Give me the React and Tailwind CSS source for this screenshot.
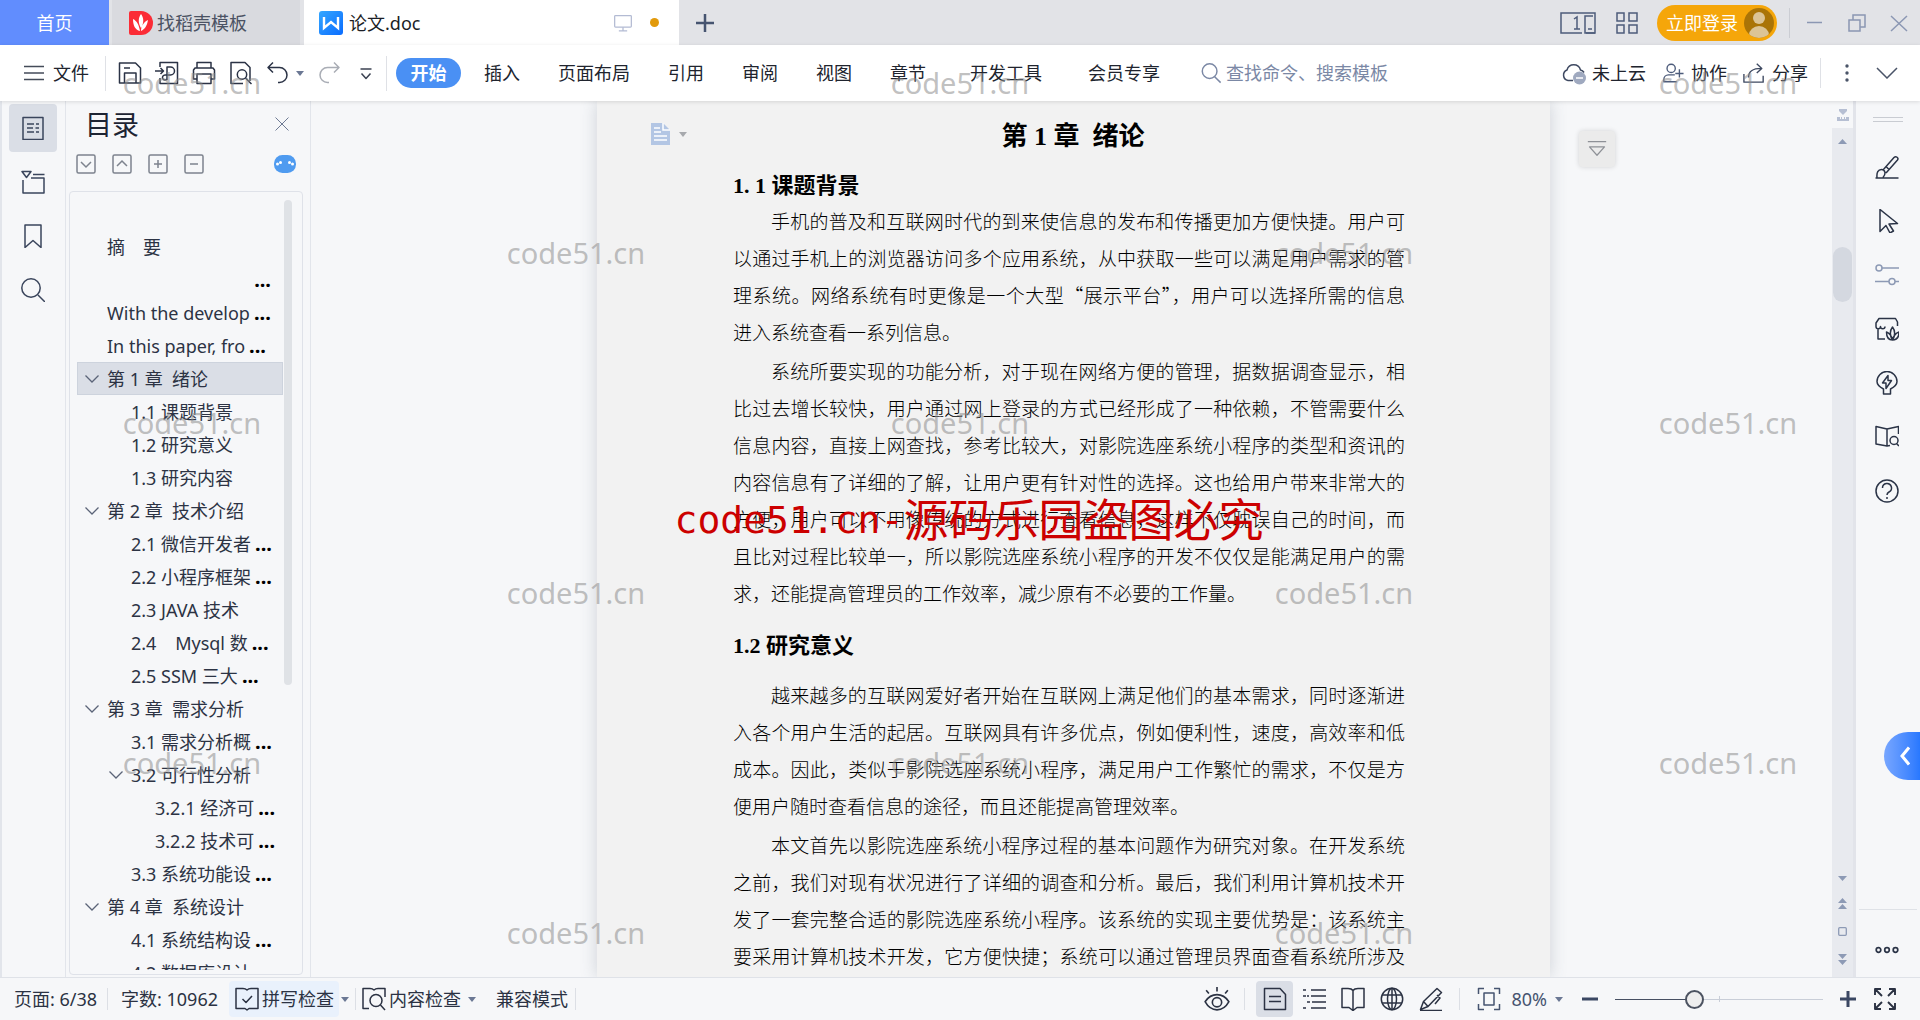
import { useState } from 'react';

const Svg = ({ size = 24, sw = 1.5, className = '', children }) => (
  <svg
    width={size}
    height={size}
    viewBox="0 0 24 24"
    fill="none"
    stroke="currentColor"
    strokeWidth={sw}
    strokeLinejoin="round"
    className={`shrink-0 ${className}`}
    aria-hidden="true"
  >
    {children}
  </svg>
);

const Caret = ({ className = 'text-[#6b7894]' }) => (
  <svg width="8" height="5" viewBox="0 0 8 5" className={`shrink-0 ${className}`} aria-hidden="true">
    <path d="M0 0h8L4 5z" fill="currentColor" />
  </svg>
);

const outline = [
  { level: 1, text: '摘\u3000要' },
  { level: 1, text: '', cut: true },
  { level: 1, text: 'With the develop', cut: true },
  { level: 1, text: 'In this paper, fro', cut: true },
  { level: 1, text: '第 1 章  绪论', open: true },
  { level: 2, text: '1.1 课题背景' },
  { level: 2, text: '1.2 研究意义' },
  { level: 2, text: '1.3 研究内容' },
  { level: 1, text: '第 2 章  技术介绍', open: true },
  { level: 2, text: '2.1 微信开发者', cut: true },
  { level: 2, text: '2.2 小程序框架', cut: true },
  { level: 2, text: '2.3 JAVA 技术' },
  { level: 2, text: '2.4    Mysql 数', cut: true },
  { level: 2, text: '2.5 SSM 三大', cut: true },
  { level: 1, text: '第 3 章  需求分析', open: true },
  { level: 2, text: '3.1 需求分析概', cut: true },
  { level: 2, text: '3.2 可行性分析', open: true },
  { level: 3, text: '3.2.1 经济可', cut: true },
  { level: 3, text: '3.2.2 技术可', cut: true },
  { level: 2, text: '3.3 系统功能设', cut: true },
  { level: 1, text: '第 4 章  系统设计', open: true },
  { level: 2, text: '4.1 系统结构设', cut: true },
  { level: 2, text: '4.2 数据库设计' },
];

const indent = { 1: 'pl-2', 2: 'pl-8', 3: 'pl-14' };

function TitleBar() {
  return (
    <header className="flex h-[45px] shrink-0 items-center bg-[#e2e3e7] text-lg">
      <button className="h-full w-[109px] bg-[#618dfe] text-white">首页</button>
      <button className="ml-[3px] flex h-full w-[188px] items-center gap-1 bg-[#d9dadf] pl-[17px] text-[#4b5263]">
        <svg width="24" height="24" viewBox="0 0 24 24" aria-hidden="true">
          <path d="M2 0h10a12 12 0 0 1 0 24H2a2 2 0 0 1-2-2V2a2 2 0 0 1 2-2z" fill="#fb2c36" />
          <path d="M12 3c3 4 3 9 0 14-3-5-3-10 0-14zM4 8c4 2 6 6 7 12-5-1-7-6-7-12zM19 9c-1 6-3 9-7 11 0-5 3-9 7-11z" fill="#fff" />
        </svg>
        找稻壳模板
      </button>
      <button className="ml-1 flex h-full w-[375px] items-center bg-white pl-[15px] text-[#1b1e26]">
        <svg width="24" height="24" viewBox="0 0 24 24" className="mr-1.5" aria-hidden="true">
          <defs>
            <linearGradient id="writer" x1="0" y1="0" x2="1" y2="1">
              <stop offset="0" stopColor="#35a7ff" />
              <stop offset="1" stopColor="#0a6cff" />
            </linearGradient>
          </defs>
          <rect width="24" height="24" rx="3" fill="url(#writer)" />
          <path d="M5 6v11l7-6 7 6V6" fill="none" stroke="#fff" strokeWidth="2.4" />
        </svg>
        <span className="flex-1 text-left">论文.doc</span>
        <Svg size={20} className="mr-[17px] text-[#b3bbd3]">
          <rect x="2" y="3" width="20" height="14" rx="1" />
          <path d="M12 17v4M7 21.5h10" />
        </Svg>
        <span className="mr-5 h-[9px] w-[9px] rounded-full bg-[#e29a0c]" />
      </button>
      <button className="ml-[17px] text-[#465470]" aria-label="新建">
        <svg width="18" height="18" viewBox="0 0 18 18" aria-hidden="true">
          <path d="M9 0v18M0 9h18" stroke="currentColor" strokeWidth="2.5" />
        </svg>
      </button>

      <div className="ml-auto flex h-full items-center pr-3 text-[#4d5c7b]">
        <svg width="36" height="22" viewBox="0 0 36 22" fill="none" stroke="currentColor" strokeWidth="1.5" className="mr-5" aria-hidden="true">
          <path d="M22 21H1V1h34v20h-9" />
          <path d="M33 4h-8v17h10M28 17h4" />
          <path d="M14 7l3-2v12M14 17h6" />
        </svg>
        <svg width="22" height="22" viewBox="0 0 22 22" fill="none" stroke="currentColor" strokeWidth="1.5" className="mr-[19px]" aria-hidden="true">
          <path d="M1 1h7v8H1zM13 1h8v8h-8zM1 13h7v8H1zM13 13h8v8h-8z" />
        </svg>
        <button className="flex h-9 w-[120px] items-center justify-between rounded-full bg-[#f5a60a] pl-[9px] pr-[3px] text-white">
          立即登录
          <svg width="30" height="30" viewBox="0 0 30 30" aria-hidden="true">
            <clipPath id="face"><circle cx="15" cy="15" r="15" /></clipPath>
            <g clipPath="url(#face)">
              <rect width="30" height="30" fill="#aa7407" />
              <circle cx="15" cy="10" r="6" fill="#dcc496" />
              <ellipse cx="15" cy="27" rx="10" ry="9" fill="#dcc496" />
            </g>
          </svg>
        </button>
        <span className="mx-3 h-[30px] w-px bg-[#cbcdd3]" />
        <div className="flex items-center gap-6 pl-1 text-[#8b97b3]">
          <button aria-label="最小化"><svg width="18" height="18" viewBox="0 0 18 18" fill="none" stroke="currentColor" strokeWidth="1.5"><path d="M1 8.5h15" /></svg></button>
          <button aria-label="还原"><svg width="18" height="18" viewBox="0 0 18 18" fill="none" stroke="currentColor" strokeWidth="1.5"><path d="M1 6h11v11H1zM5 6V1h12v12h-5" /></svg></button>
          <button aria-label="关闭"><svg width="18" height="18" viewBox="0 0 18 18" fill="none" stroke="currentColor" strokeWidth="1.5"><path d="M1 2l16 15M17 2L1 17" /></svg></button>
        </div>
      </div>
    </header>
  );
}

function Toolbar() {
  const menus = ['插入', '页面布局', '引用', '审阅', '视图', '章节'];
  return (
    <div className="relative z-10 flex h-14 shrink-0 items-center bg-white text-lg text-[#20242e] shadow-[0_1px_4px_rgba(0,0,0,0.12)]">
      <button className="ml-6 flex items-center gap-[9px]">
        <svg width="20" height="16" viewBox="0 0 20 16" stroke="#444b59" strokeWidth="1.5" aria-hidden="true"><path d="M0 1.5h20M0 8h20M0 14.5h20" /></svg>
        文件
      </button>
      <span className="ml-4 h-[35px] w-px bg-[#dfe1e6]" />
      <div className="ml-3 flex items-center gap-[13px] text-[#2b3346]">
        <button aria-label="保存">
          <Svg><path d="M1.5 2h16l5 5v15H1.5zM6.5 22V12h11.5v10M6 7h6" /></Svg>
        </button>
        <button aria-label="输出为PDF">
          <Svg><path d="M5 6V1.5h17.5v21H5V17M0 10h8M5.5 7l3 3-3 3" /><path d="M12 19V6h3.5a4 4 0 0 1 0 8H10a2.5 2.5 0 1 0 2 4" /></Svg>
        </button>
        <button aria-label="打印">
          <Svg><path d="M5 7V1.5h14V7M5 18H1.5V9L3 7h18l1.5 2v9H19M5 13h14v9.5H5z" /></Svg>
        </button>
        <button aria-label="打印预览">
          <Svg><path d="M14 22.5H2V1.5h14l5 5V20" /><circle cx="13" cy="13.5" r="4.7" /><path d="M16.5 17l6 6" /></Svg>
        </button>
        <button aria-label="撤销">
          <Svg><path d="M7 1.5L2 6.5l5 5M2 6.5h11.5a7 7 0 0 1 0 15H12" /></Svg>
        </button>
      </div>
      <button className="ml-[6px]" aria-label="撤销列表"><Caret /></button>
      <button className="ml-[13px] text-[#a9adb5]" aria-label="恢复">
        <Svg><path d="M17 1.5l5 5-5 5M22 6.5H10.5a7 7 0 0 0 0 15H12" /></Svg>
      </button>
      <button className="ml-[13px] text-[#3b4252]" aria-label="更多">
        <Svg><path d="M6.5 8h11M7.5 12.5l4.5 5 4.5-5" /></Svg>
      </button>
      <span className="ml-2 h-[35px] w-px bg-[#dfe1e6]" />
      <button className="ml-[9px] h-[30px] w-[65px] rounded-full bg-[#4a90f4] font-bold text-white">开始</button>
      <nav className="ml-[23px] flex gap-[38px] whitespace-nowrap">
        {menus.map((m) => (
          <button key={m}>{m}</button>
        ))}
      </nav>
      <nav className="ml-11 flex gap-[46px] whitespace-nowrap">
        <button>开发工具</button>
        <button>会员专享</button>
      </nav>
      <label className="ml-10 flex items-center gap-1 text-[#7b88a5]">
        <Svg size={22} sw={1.6}><circle cx="10.5" cy="10" r="8" /><path d="M16 16l6.5 6.5" /></Svg>
        <input className="w-[170px] outline-none placeholder:text-[#7b88a5]" placeholder="查找命令、搜索模板" />
      </label>

      <div className="ml-auto flex items-center whitespace-nowrap">
        <button className="flex items-center gap-1.5">
          <Svg className="text-[#3e4961]">
            <path d="M11 19.5H6A5.5 5.5 0 0 1 5 9a7 7 0 0 1 13.5 0c1.5.3 2.8 1.3 3.5 2.5" />
            <circle cx="17.5" cy="17" r="6.5" fill="#9fa9bf" stroke="none" />
            <path d="M14 17h7" stroke="#fff" />
          </Svg>
          未上云
        </button>
        <button className="ml-4 flex items-center gap-[7px]">
          <Svg size={22} className="text-[#4d5c7b]"><circle cx="10" cy="7" r="4.5" /><path d="M16 21.5H2V19a5 5 0 0 1 5-5h7M19 8v9M14.5 12.5h9" /></Svg>
          协作
        </button>
        <button className="ml-4 flex items-center gap-[7px]">
          <Svg size={22} className="text-[#3e4961]"><path d="M1 13v9h21v-7M6 17c0-7 4-10 14-10M15 2l5.5 5-5.5 5" /></Svg>
          分享
        </button>
        <span className="ml-3 h-[30px] w-px bg-[#dfe1e6]" />
        <button className="ml-[23px]" aria-label="选项">
          <svg width="6" height="20" viewBox="0 0 6 20" fill="#4a5468"><circle cx="3" cy="3" r="1.7" /><circle cx="3" cy="10" r="1.7" /><circle cx="3" cy="17" r="1.7" /></svg>
        </button>
        <button className="ml-[26px] mr-[22px]" aria-label="收起功能区">
          <svg width="22" height="12" viewBox="0 0 22 12" fill="none" stroke="#4a5468" strokeWidth="1.5"><path d="M1 1l10 10L21 1" /></svg>
        </button>
      </div>
    </div>
  );
}

function LeftRail() {
  return (
    <aside className="flex w-[66px] shrink-0 flex-col items-center border-r border-l-2 border-[#e2e5eb] pt-[3px] pr-0.5 text-[#3a455c]">
      <button className="flex h-12 w-12 items-center justify-center rounded bg-[#dadee6]" aria-label="目录">
        <Svg><path d="M2 1.500h20v22H2zM6 8h7M6 12h6M6 16h7M15 8h3M14.500 12H18M15 16h3" /></Svg>
      </button>
      <button className="mt-1.5 flex h-12 w-12 items-center justify-center" aria-label="章节">
        <Svg><path d="M1 1.500h9l-4.500 6zM12 4.500h11.500M10 8h13v15H2V10" /></Svg>
      </button>
      <button className="mt-1.5 flex h-12 w-12 items-center justify-center" aria-label="书签">
        <Svg><path d="M4 1h16v22.500l-8-7-8 7z" /></Svg>
      </button>
      <button className="mt-1.5 flex h-12 w-12 items-center justify-center" aria-label="查找">
        <Svg><circle cx="10" cy="10" r="9.200" /><path d="M17 17l7 7" /></Svg>
      </button>
    </aside>
  );
}

const treeTools = [
  { name: '展开', d: 'M5 8l5 5 5-5' },
  { name: '折叠', d: 'M5 12l5-5 5 5' },
  { name: '新增', d: 'M10 6v8M6 10h8' },
  { name: '删除', d: 'M6 10h8' },
];

function OutlinePane() {
  const [active, setActive] = useState(4);
  return (
    <aside className="flex w-[245px] shrink-0 flex-col border-r border-[#e2e5eb] pb-[2px] text-[#2c3344]">
      <div className="flex h-[46px] items-center justify-between pl-[19px] pr-[21px]">
        <h2 className="text-[27px] leading-none text-[#1d2433]">目录</h2>
        <button aria-label="关闭目录">
          <svg width="14" height="14" viewBox="0 0 14 14" fill="none" stroke="#6e7a94"><path d="M.5.5l13 13M13.5.5l-13 13" /></svg>
        </button>
      </div>
      <div className="flex h-11 items-center gap-4 pl-[10px] pr-[14px] pb-2.5 text-[#7d838e]">
        {treeTools.map((t) => (
          <button key={t.name} aria-label={t.name}>
            <svg width="20" height="20" viewBox="0 0 20 20" fill="none" stroke="currentColor" strokeWidth="1.5">
              <rect x="1" y="1" width="18" height="18" rx="1.5" />
              <path d={t.d} />
            </svg>
          </button>
        ))}
        <button className="ml-auto" aria-label="智能识别目录">
          <svg width="22" height="18" viewBox="0 0 22 18">
            <rect width="22" height="18" rx="8.5" fill="#4f9bf0" />
            <g fill="#fff"><circle cx="3.5" cy="9" r="1.5" /><circle cx="6.5" cy="7.5" r="1.5" /><circle cx="15.5" cy="7.5" r="1.5" /><circle cx="18.5" cy="9" r="1.5" /></g>
          </svg>
        </button>
      </div>
      <div className="ml-[3px] mr-[7px] flex min-h-0 flex-1 overflow-hidden rounded-sm border border-[#dfe2e9] pl-[7px]">
        <ul className="mt-[38px] mb-1 flex-1 overflow-hidden text-lg">
          {outline.map((item, i) => (
            <li key={i}>
              <a
                href={`#s${i}`}
                onClick={() => setActive(i)}
                className={`flex h-[33px] items-center whitespace-pre ${indent[item.level]} ${
                  i === active ? 'bg-[#dadee6] outline-1 -outline-offset-1 outline-[#cdd3dd]' : ''
                }`}
              >
                <span className="flex w-[22px] shrink-0">
                  {item.open && (
                    <svg width="14" height="8" viewBox="0 0 14 8" fill="none" stroke="#5b6478" strokeWidth="1.3"><path d="M.5.5l6.5 6.5L13.5.5" /></svg>
                  )}
                </span>
                {item.text}
                {item.cut && <span className={`text-xl leading-7 font-bold text-black ${item.text ? 'ml-1' : 'ml-auto mr-3'}`}>...</span>}
              </a>
            </li>
          ))}
        </ul>
        <div className="ml-[1px] mr-2.5 mt-2 h-[485px] w-2 rounded-full bg-[#dfe2e6]" />
      </div>
    </aside>
  );
}

function Page() {
  return (
    <article className="bg-[#f2f2f2] pr-[145px] pl-[136px] text-black shadow-[0_0_16px_rgba(70,80,100,0.22)]">
      <div className="relative">
        <button className="absolute top-[22px] -left-[82px] flex items-center gap-2" aria-label="段落布局">
          <svg width="20" height="22" viewBox="0 0 20 22">
            <path d="M0 0h12l7 7v15H0z" fill="#b3c6e4" />
            <path d="M12 0v7h7M3 5h6M3 9h7M3 13h13M3 17h13" stroke="#fff" strokeWidth="1.5" fill="none" />
          </svg>
          <Caret className="text-[#a7a9ad]" />
        </button>
      </div>
      <h1 className="pt-4 pl-2 text-center font-['Liberation_Serif','Noto_Sans_CJK_SC',serif] text-[26px] leading-10 font-bold whitespace-pre">第 1 章  绪论</h1>
      <h2 className="pt-3 font-['Liberation_Serif','Noto_Sans_CJK_SC',serif] text-[22px] leading-[33px] font-bold">1. 1 课题背景</h2>
      <div className="text-justify font-['Noto_Sans_CJK_SC',serif] text-[19px] leading-[37px] font-light">
        <p className="indent-[38px]">
          手机的普及和互联网时代的到来使信息的发布和传播更加方便快捷。用户可以通过手机上的浏览器访问多个应用系统，从中获取一些可以满足用户需求的管理系统。网络系统有时更像是一个大型“展示平台”，用户可以选择所需的信息进入系统查看一系列信息。
        </p>
        <p className="mt-[2px] indent-[38px]">
          系统所要实现的功能分析，对于现在网络方便的管理，据数据调查显示，相比过去增长较快，用户通过网上登录的方式已经形成了一种依赖，不管需要什么信息内容，直接上网查找，参考比较大，对影院选座系统小程序的类型和资讯的内容信息有了详细的了解，让用户更有针对性的选择。这也给用户带来非常大的方便，用户可以不用像传统的方式进行查看信息，这样不仅耽误自己的时间，而且比对过程比较单一，所以影院选座系统小程序的开发不仅仅是能满足用户的需求，还能提高管理员的工作效率，减少原有不必要的工作量。
        </p>
      </div>
      <h2 className="pt-[18px] font-['Liberation_Serif','Noto_Sans_CJK_SC',serif] text-[22px] leading-[33px] font-bold">1.2 研究意义</h2>
      <div className="pt-3.5 text-justify font-['Noto_Sans_CJK_SC',serif] text-[19px] leading-[37px] font-light">
        <p className="indent-[38px]">
          越来越多的互联网爱好者开始在互联网上满足他们的基本需求，同时逐渐进入各个用户生活的起居。互联网具有许多优点，例如便利性，速度，高效率和低成本。因此，类似于影院选座系统小程序，满足用户工作繁忙的需求，不仅是方便用户随时查看信息的途径，而且还能提高管理效率。
        </p>
        <p className="mt-[2px] indent-[38px] [text-align-last:justify]">
          本文首先以影院选座系统小程序过程的基本问题作为研究对象。在开发系统之前，我们对现有状况进行了详细的调查和分析。最后，我们利用计算机技术开发了一套完整合适的影院选座系统小程序。该系统的实现主要优势是：该系统主要采用计算机技术开发，它方便快捷；系统可以通过管理员界面查看系统所涉及
        </p>
      </div>
    </article>
  );
}

function ScrollBar() {
  return (
    <div className="flex w-6 shrink-0 flex-col border-r-[3px] border-[#e2e4ea] text-[#8d9ab5]">
      <button className="flex h-[27px] items-center justify-center text-[#b6bfd3]" aria-label="标尺">
        <svg width="12" height="12" viewBox="0 0 12 12" fill="currentColor"><path d="M2 0h8v2L6 6 2 2zM0 8h3v2h1V8h1v2h2V8h1v2h1V8h3v4H0z" /></svg>
      </button>
      <div className="flex flex-1 flex-col items-center bg-[#e8eaef]">
        <button className="mt-[11px]" aria-label="向上滚动"><svg width="9" height="5" viewBox="0 0 9 5" className="block"><path d="M0 5h9L4.5 0z" fill="currentColor" /></svg></button>
        <div className="mt-[103px] h-[55px] w-[19px] rounded-full bg-[#d4d8e0]" />
        <button className="mt-auto" aria-label="向下滚动"><svg width="9" height="5" viewBox="0 0 9 5" className="block"><path d="M0 0h9L4.5 5z" fill="currentColor" /></svg></button>
        <button className="mt-[17px]" aria-label="上一页"><svg width="9" height="11" viewBox="0 0 9 11" className="block"><path d="M0 5h9L4.5 0zM0 11h9L4.5 6z" fill="currentColor" /></svg></button>
        <button className="mt-[18px]" aria-label="选择浏览对象"><svg width="9" height="9" viewBox="0 0 9 9" className="block"><rect x=".7" y=".7" width="7.6" height="7.6" rx="1" fill="none" stroke="currentColor" strokeWidth="1.3" /></svg></button>
        <button className="mt-[18px] mb-3" aria-label="下一页"><svg width="9" height="11" viewBox="0 0 9 11" className="block"><path d="M0 0h9L4.5 5zM0 6h9l-4.5 5z" fill="currentColor" /></svg></button>
      </div>
    </div>
  );
}

const sideTools = [
  { name: '样式', art: <path d="M.5 23h23M2 22.5c-.5-5 1-8 4.5-8s5 4 1.5 8M8 15L19 2.5c2-2 5 .5 3.5 2.5L11 18M11.5 12l3 3" /> },
  { name: '选择', art: <path d="M5 .5l17.500 14-8.500.5 4.500 7-3.500 2-4-7.500-6 6z" /> },
  { name: '属性', soft: true, art: <><circle cx="4" cy="5" r="3" /><path d="M7 5h17M0 18.5h14M20 18.5h4" /><circle cx="17" cy="18.5" r="3" /></> },
  { name: '素材', art: <><path d="M22.5 9V5l-2-3.5H4L1 6v3.5c0 3 4.500 3 4.500 0 0 3 4.500 3 4.500 0M3 12.5v9.5h7" /><path d="M17.5 10c3 4 3 8 0 13-3-5-3-9 0-13zM11.5 15c3 1 5 4 6 8-4 0-6-3-6-8zM24 15c-3 1-5.500 4-6.500 8 4 0 6.500-3 6.500-8z" /></> },
  { name: '推荐', art: <><path d="M8.500 18C4 16 2 13.500 2 10.500a10 10 0 0 1 20 0c0 3-2 5.500-6 7.500v5H8.500z" stroke="none" /><path d="M8.500 23v-5C4.500 16 2 13.500 2 10.500a10 10 0 0 1 20 0c0 3-2.500 5.500-6.500 7.500v5z" /><path d="M13 4.500L7.500 12H11v5.500l5.500-8H13z" /></> },
  { name: '查阅', art: <><path d="M12 4v17l-11-2V1.5L12 4l11.5-2.5V9M12 21l3-.5" /><circle cx="19" cy="15.5" r="4" /><path d="M21.5 18.5l2.5 2.5" /></> },
  { name: '帮助', art: <><circle cx="12" cy="12" r="11" /><path d="M7.5 9a4.5 4.5 0 1 1 6.5 4c-1.500.8-2 1.500-2 3M12 18v2" /></> },
];

function RightRail() {
  return (
    <aside className="flex w-16 shrink-0 flex-col items-center text-[#2b3447]">
      <div className="mt-4 mb-[18px] h-[5px] w-[30px] border-y border-[#c9ccd2]" />
      {sideTools.map((t) => (
        <button key={t.name} aria-label={t.name} className={`flex h-[54px] w-full items-center justify-center pr-0.5 ${t.soft ? 'text-[#8d9ab5]' : ''}`}>
          <Svg>{t.art}</Svg>
        </button>
      ))}
      <button className="mt-auto mb-[129px] flex h-12 w-9 items-center justify-center self-end rounded-l-full bg-linear-to-r from-[#77a6ff] to-[#2878ff] pl-1.5" aria-label="展开侧栏">
        <svg width="10" height="20" viewBox="0 0 10 20" fill="none" stroke="#fff" strokeWidth="3"><path d="M9 1.500L2 10l7 8.500" /></svg>
      </button>
      <span className="h-px w-[58px] shrink-0 bg-[#dfe2e7]" />
      <button className="flex h-[67px] items-center pt-3 pr-0.5" aria-label="更多工具">
        <svg width="24" height="8" viewBox="0 0 24 8" fill="none" stroke="currentColor" strokeWidth="1.7"><circle cx="3.5" cy="4" r="2.3" /><circle cx="12" cy="4" r="2.3" /><circle cx="20.5" cy="4" r="2.3" /></svg>
      </button>
    </aside>
  );
}

const Divider = ({ className = '' }) => <span className={`h-[22px] w-px shrink-0 bg-[#dcdfe5] ${className}`} />;

const views = [
  { name: '页面视图', on: true, art: <path d="M1.5 1.5H17l5.5 6v15h-21zM6 9.5h12M6 14.5h12" /> },
  { name: '大纲', art: <path d="M1 3h3M9 3h15M1 9h3M5 9h2M9 9h15M5 15h3M10 15h14M1 21h3M9 21h15" /> },
  { name: '阅读版式', art: <path d="M12 3.5C11 2 9 1.5 7 1.5H1v19h7l4 3 4-3h7v-19h-6c-2 0-4 .5-5 2zM12 3.5v19" /> },
  { name: 'Web版式', art: <><circle cx="12" cy="12" r="10.7" /><ellipse cx="12" cy="12" rx="4.5" ry="10.7" /><path d="M2 8h20M2 16h20M12 1v22" /></> },
  { name: '写作模式', art: <path d="M1 23.5h22M1.5 22.5l3-8L18 1.5l4.5 4L9 19.5zM4.5 14.5L9 19.5M18 8l3 3-5 6" /> },
];

function StatusBar() {
  const [zoom, setZoom] = useState(80);
  return (
    <footer className="flex h-[43px] shrink-0 items-center border-t border-[#dfe2e8] bg-[#f6f7f9] text-lg whitespace-nowrap text-[#2b3243]">
      <span className="ml-3.5 w-[93px]">页面: 6/38</span>
      <Divider />
      <span className="ml-[13px] w-[108px]">字数: 10962</span>
      <button className="flex h-9 w-[110px] items-center gap-[3px] rounded-sm bg-[#e9f1fc] pl-1.5">
        <Svg><path d="M12 3c-1-1-2-1.5-4-1.5H1v20h9l2 1.5 2-1.5h9v-20h-7c-2 0-3 .5-4 1.5zM7.5 12l3.5 3.5 6-6.5" /></Svg>
        拼写检查
      </button>
      <button className="ml-[2px]" aria-label="拼写选项"><Caret /></button>
      <Divider className="mx-[6px]" />
      <button className="flex items-center gap-[3px]">
        <Svg><path d="M7 21.5H1v-20h7c2 0 3 .5 4 1.5 1-1 2-1.5 4-1.5h7V10" /><circle cx="14" cy="13.5" r="6" /><path d="M18.5 18l4.5 5" /></Svg>
        内容检查
      </button>
      <button className="ml-[7px]" aria-label="内容选项"><Caret /></button>
      <span className="ml-5">兼容模式</span>
      <Divider className="ml-[7px]" />

      <div className="ml-auto flex items-center">
        <button aria-label="护眼模式">
          <Svg size={26}><path d="M1 14.5C4 10 8 8 12 8s8 2 11 6.5C20 20 16 22 12 22S4 20 1 14.5zM12 1v4M2 4l2.5 3M22 4l-2.5 3" /><circle cx="12" cy="15" r="4.3" /></Svg>
        </button>
        <Divider className="mr-[11px] ml-3.5" />
        <div className="flex items-center gap-[2px]">
          {views.map((v) => (
            <button key={v.name} aria-label={v.name} className={`flex h-9 w-[37px] items-center justify-center rounded-sm ${v.on ? 'bg-[#dadee6]' : ''}`}>
              <Svg>{v.art}</Svg>
            </button>
          ))}
        </div>
        <Divider className="mr-[17px] ml-2.5" />
        <button aria-label="最佳显示比例">
          <Svg className="text-[#465470]"><path d="M1.5 7V1.5H7M17 1.5h5.5V7M22.5 17v5.5H17M7 22.5H1.5V17M7 6h10v12H7z" /></Svg>
        </button>
        <button className="ml-2.5 flex items-center gap-2 text-[#465470]">{zoom}% <Caret /></button>
        <button className="ml-[19px]" aria-label="缩小" onClick={() => setZoom(zoom - 10)}>
          <svg width="16" height="4" viewBox="0 0 16 4"><path d="M0 2h16" stroke="#3a4763" strokeWidth="3" /></svg>
        </button>
        <div className="relative mx-[17px] flex w-[208px] items-center">
          <input
            type="range"
            min="10"
            max="200"
            value={zoom}
            onChange={(e) => setZoom(Number(e.target.value))}
            aria-label="显示比例"
            className="h-5 w-full appearance-none bg-[linear-gradient(to_right,#475063_38%,#c9ced8_38%)] bg-[length:100%_1px] bg-center bg-no-repeat [&::-webkit-slider-thumb]:h-[19px] [&::-webkit-slider-thumb]:w-[19px] [&::-webkit-slider-thumb]:appearance-none [&::-webkit-slider-thumb]:rounded-full [&::-webkit-slider-thumb]:border-2 [&::-webkit-slider-thumb]:border-[#4c5361] [&::-webkit-slider-thumb]:bg-[#eeeeee]"
          />
          <span className="absolute top-1/2 left-1/2 h-1.5 w-px -translate-y-1/2 bg-[#c9ced8]" />
        </div>
        <button aria-label="放大" onClick={() => setZoom(zoom + 10)}>
          <svg width="16" height="16" viewBox="0 0 16 16"><path d="M8 0v16M0 8h16" stroke="#3a4763" strokeWidth="3" /></svg>
        </button>
        <button className="mr-[23px] ml-[17px]" aria-label="全屏显示">
          <Svg size={24} sw={1.9}><path d="M2 8V2h6M2 2l7 7M16 2h6v6M22 2l-7 7M22 16v6h-6M22 22l-7-7M8 22H2v-6M2 22l7-7" /></Svg>
        </button>
      </div>
    </footer>
  );
}

// Staggered site marks over the whole window, plus the red notice
function Watermarks() {
  return (
    <div className="pointer-events-none absolute inset-0 z-20 grid grid-cols-5 grid-rows-6" aria-hidden="true">
      {Array.from({ length: 30 }, (_, i) => (
        <div key={i} className="flex items-center justify-center pb-1.5 font-['Noto_Sans',sans-serif] text-[29px] leading-none text-[#8c8c8c]/55">
          {i % 2 === 0 && 'code51.cn'}
        </div>
      ))}
      <p className="absolute inset-x-0 top-1/2 flex items-center justify-center pl-[18px] text-[45px] leading-5 whitespace-nowrap text-[#cc0000]">
        <span className="font-['DejaVu_Sans_Mono',monospace] text-[38px]">code51.cn-</span>源码乐园盗图必究
      </p>
    </div>
  );
}

export default function App() {
  return (
    <div className="relative flex h-screen flex-col overflow-hidden bg-[#f6f7f9] font-['Noto_Sans','Noto_Sans_CJK_SC',sans-serif]">
      <TitleBar />
      <Toolbar />
      <div className="flex min-h-0 flex-1">
        <LeftRail />
        <OutlinePane />
        <main className="grid min-w-0 flex-1 grid-cols-[1fr_953px_1fr] overflow-hidden pl-1">
          <span />
          <Page />
          <div>
            <button className="mt-[30px] ml-[29px] flex h-9 w-9 items-center justify-center rounded-sm bg-[#ebebeb] text-[#8e9197] shadow-[0_0_5px_rgba(0,0,0,0.15)]" aria-label="返回正文">
              <Svg size={20}><path d="M1 3h22M3 9.5h18l-9 10z" /></Svg>
            </button>
          </div>
        </main>
        <ScrollBar />
        <RightRail />
      </div>
      <StatusBar />
      <Watermarks />
    </div>
  );
}
